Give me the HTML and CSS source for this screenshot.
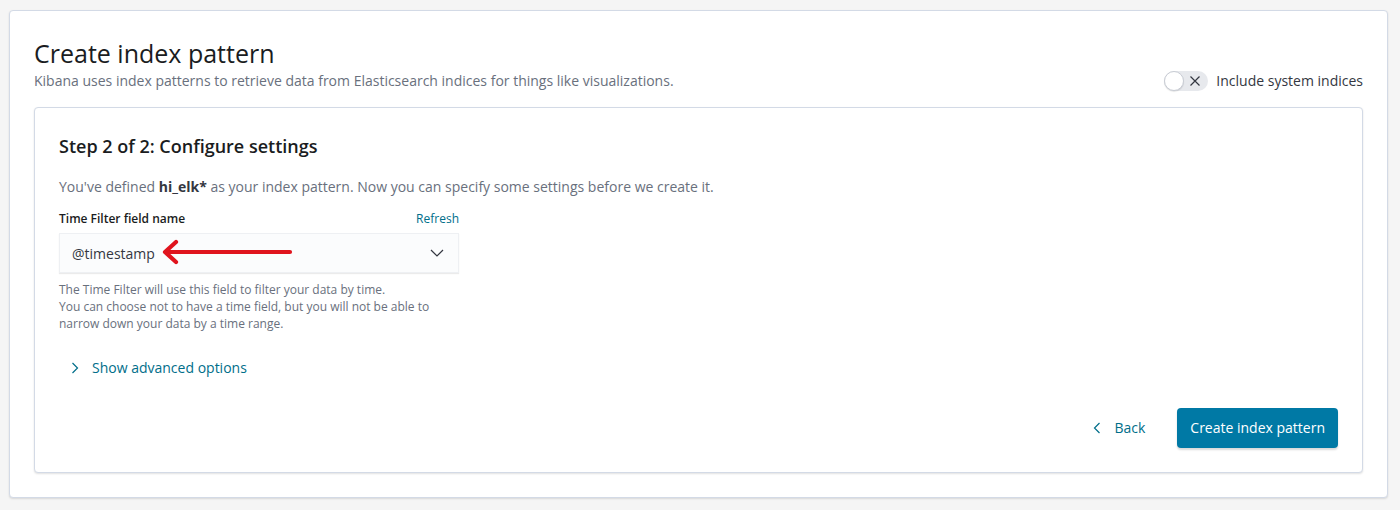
FILE: index.html
```html
<!DOCTYPE html>
<html>
<head>
<meta charset="utf-8">
<link rel="stylesheet" href="styles.css">
</head>
<body>
<div class="page">
  <div class="panel outer">
    <div class="header">
      <div class="header-text">
        <h1 class="title">Create index pattern</h1>
        <p class="subtitle">Kibana uses index patterns to retrieve data from Elasticsearch indices for things like visualizations.</p>
      </div>
      <div class="switch-wrap">
        <span class="switch">
          <span class="knob"></span>
          <svg class="switch-x" width="12" height="12" viewBox="0 0 12 12"><path d="M1.5 1.5 L10.5 10.5 M10.5 1.5 L1.5 10.5" stroke="#343741" stroke-width="1.2" fill="none"/></svg>
        </span>
        <span class="switch-label">Include system indices</span>
      </div>
    </div>
    <div class="panel inner">
      <h2 class="step">Step 2 of 2: Configure settings</h2>
      <p class="desc">You've defined <b>hi_elk*</b> as your index pattern. Now you can specify some settings before we create it.</p>
      <div class="form-row">
        <div class="label-row">
          <span class="label">Time Filter field name</span>
          <a class="small-link">Refresh</a>
        </div>
        <div class="select">
          <span class="select-value">@timestamp</span>
          <svg class="chev-down" width="14" height="8" viewBox="0 0 14 8"><path d="M1 1 L7 7 L13 1" stroke="#343741" stroke-width="1.2" fill="none"/></svg>
          <svg class="arrow" width="134" height="26" viewBox="0 0 134 26"><path d="M130 13 L6 13 M16 3 L5 13 L16 23" stroke="#e0141e" stroke-width="4.2" stroke-linecap="round" stroke-linejoin="round" fill="none"/></svg>
        </div>
        <div class="help">The Time Filter will use this field to filter your data by time.<br>You can choose not to have a time field, but you will not be able to<br>narrow down your data by a time range.</div>
      </div>
      <a class="advanced">
        <svg width="8" height="12" viewBox="0 0 8 12"><path d="M1.5 1 L6.5 6 L1.5 11" stroke="#006e8a" stroke-width="1.2" fill="none"/></svg>
        <span>Show advanced options</span>
      </a>
      <div class="actions">
        <a class="back">
          <svg width="8" height="12" viewBox="0 0 8 12"><path d="M6.5 1 L1.5 6 L6.5 11" stroke="#006e8a" stroke-width="1.2" fill="none"/></svg>
          <span>Back</span>
        </a>
        <button class="primary">Create index pattern</button>
      </div>
    </div>
  </div>
</div>
</body>
</html>
```
FILE: styles.css
```css
* { box-sizing: border-box; }
html, body { margin: 0; padding: 0; }
body {
  background: #f5f5f5;
  font-family: "Open Sans", "Liberation Sans", sans-serif;
  color: #343741;
  width: 1400px;
  height: 510px;
  overflow: hidden;
}
.page {
  padding: 10px 12px 10px 9px;
}
.panel {
  background: #fff;
  border: 1px solid #d3dae6;
  border-radius: 4px;
  box-shadow: 0 1px 2px rgba(0,0,0,0.12);
  padding: 24px;
}
.header {
  display: flex;
  align-items: flex-end;
  justify-content: space-between;
  margin-bottom: 16px;
}
.title {
  margin: 0;
  font-size: 25px;
  font-weight: 400;
  line-height: 36px;
  color: #1a1c21;
}
.subtitle {
  margin: -1px 0 0;
  font-size: 14px;
  line-height: 21px;
  color: #69707d;
}
.switch-wrap {
  display: flex;
  align-items: center;
  gap: 8px;
  margin-bottom: 0;
}
.switch {
  position: relative;
  display: inline-flex;
  align-items: center;
  width: 44px;
  height: 20px;
  border-radius: 10px;
  background: #e7e9ed;
}
.knob {
  width: 20px;
  height: 20px;
  border-radius: 50%;
  background: #fff;
  border: 1px solid #c8ccd4;
  box-shadow: 0 1px 1px rgba(0,0,0,0.1);
}
.switch-x {
  margin-left: 5px;
}
.switch-label {
  font-size: 14px;
  line-height: 20px;
  color: #343741;
}
.inner {
  padding: 24px;
}
.step {
  margin: 0;
  font-size: 18px;
  font-weight: 600;
  line-height: 28px;
  color: #1a1c21;
}
.desc {
  margin: 16px 0 0;
  font-size: 14px;
  line-height: 21px;
  color: #69707d;
}
.desc b { color: #343741; font-weight: 700; }
.form-row {
  width: 400px;
  margin-top: 13px;
}
.label-row {
  display: flex;
  justify-content: space-between;
  align-items: baseline;
  margin-bottom: 5px;
}
.label {
  font-size: 12px;
  font-weight: 600;
  line-height: 18px;
  color: #1a1c21;
}
.small-link {
  font-size: 12px;
  line-height: 18px;
  color: #006e8a;
}
.select {
  position: relative;
  display: flex;
  align-items: center;
  justify-content: space-between;
  height: 40px;
  padding: 0 12px;
  background: #fbfcfd;
  border: 1px solid #eef0f3;
  box-shadow: 0 1px 1px rgba(0,0,0,0.08);
  font-size: 14px;
  color: #343741;
}
.chev-down { margin-right: 2px; }
.arrow {
  position: absolute;
  left: 100px;
  top: 5px;
}
.help {
  margin-top: 8px;
  font-size: 12px;
  line-height: 17px;
  color: #69707d;
}
.advanced {
  display: inline-flex;
  align-items: center;
  gap: 13px;
  margin: 25px 0 0 12px;
  font-size: 14px;
  line-height: 21px;
  color: #006e8a;
}
.actions {
  display: flex;
  justify-content: flex-end;
  align-items: center;
  gap: 32px;
  margin-top: 29px;
}
.back {
  display: inline-flex;
  align-items: center;
  gap: 13px;
  font-size: 14px;
  color: #006e8a;
}
.primary {
  height: 40px;
  padding: 0 13px;
  border: none;
  border-radius: 4px;
  background: #0079a5;
  color: #fff;
  font-family: "Open Sans", "Liberation Sans", sans-serif;
  font-size: 14px;
  font-weight: 400;
  box-shadow: 0 2px 2px rgba(0,0,0,0.15);
}
```
